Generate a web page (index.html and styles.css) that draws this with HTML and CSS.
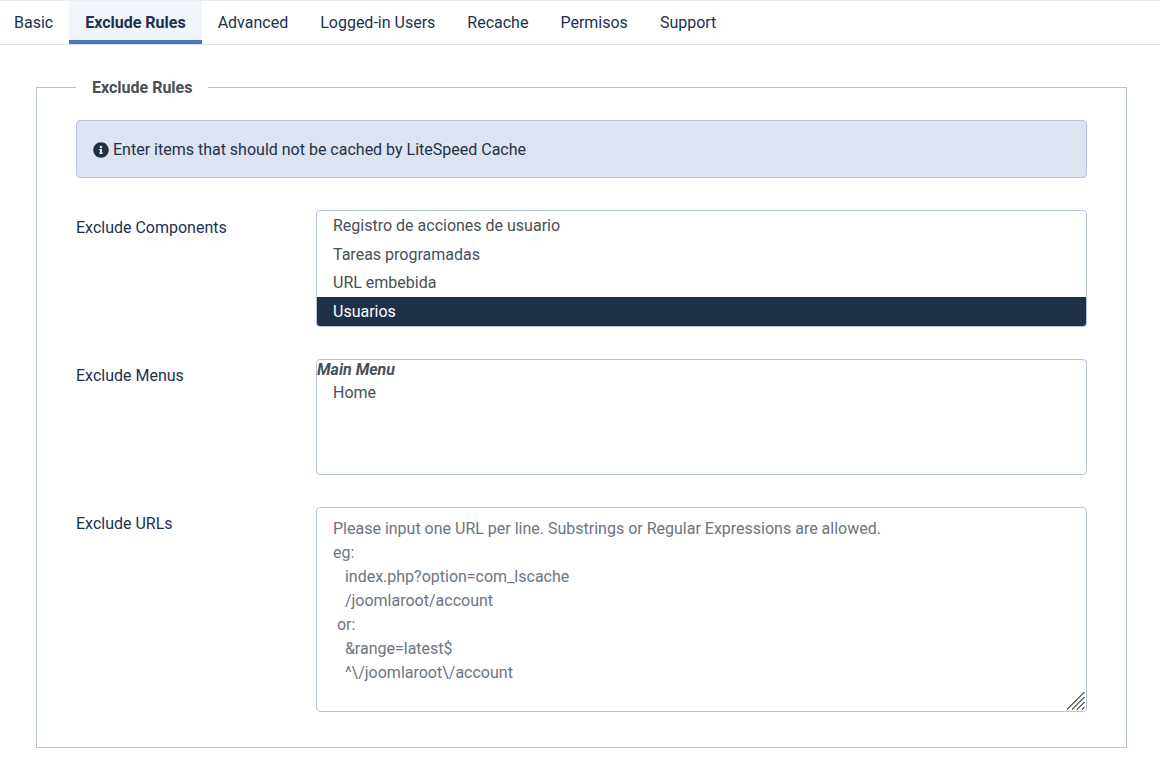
FILE: index.html
```html
<!DOCTYPE html>
<html lang="en">
<head>
<meta charset="utf-8">
<title>Exclude Rules</title>
<link rel="stylesheet" href="styles.css">
</head>
<body>
<nav class="tabs">
  <a class="tab first">Basic</a>
  <a class="tab active">Exclude Rules</a>
  <a class="tab">Advanced</a>
  <a class="tab">Logged-in Users</a>
  <a class="tab">Recache</a>
  <a class="tab">Permisos</a>
  <a class="tab">Support</a>
</nav>
<main class="content">
  <fieldset class="panel">
    <legend class="panel-title">Exclude Rules</legend>
    <div class="alert">
      <svg class="info-icon" viewBox="0 0 512 512" aria-hidden="true"><path d="M256 8C119 8 8 119 8 256s111 248 248 248 248-111 248-248S393 8 256 8zm0 110c23.200 0 42 18.800 42 42s-18.800 42-42 42-42-18.800-42-42 18.800-42 42-42zm56 254c0 6.600-5.400 12-12 12h-88c-6.600 0-12-5.400-12-12v-24c0-6.600 5.400-12 12-12h12v-64h-12c-6.600 0-12-5.400-12-12v-24c0-6.600 5.400-12 12-12h64c6.600 0 12 5.400 12 12v100h12c6.600 0 12 5.400 12 12v24z"/></svg>
      <span>Enter items that should not be cached by LiteSpeed Cache</span>
    </div>
    <div class="row">
      <label class="label label-low">Exclude Components</label>
      <div class="listbox components">
        <div class="option">Registro de acciones de usuario</div>
        <div class="option">Tareas programadas</div>
        <div class="option">URL embebida</div>
        <div class="option selected">Usuarios</div>
      </div>
    </div>
    <div class="row">
      <label class="label">Exclude Menus</label>
      <div class="listbox menus">
        <div class="group">Main Menu</div>
        <div class="option compact">Home</div>
      </div>
    </div>
    <div class="row">
      <label class="label">Exclude URLs</label>
      <div class="url-field">
        <textarea class="urls" placeholder="Please input one URL per line. Substrings or Regular Expressions are allowed.
eg:
   index.php?option=com_lscache
   /joomlaroot/account
 or:
   &amp;range=latest$
   ^\/joomlaroot\/account"></textarea>
        <svg class="grip" viewBox="0 0 18 18" aria-hidden="true"><path d="M0 17.500 17.500 0M5 17.500 17.500 5M10 17.500 17.500 10M15 17.500 17.500 15"/></svg>
      </div>
    </div>
  </fieldset>
</main>
</body>
</html>
```
FILE: styles.css
```css
* { box-sizing: border-box; }
html, body { margin: 0; background: #fff; }
body {
  font-family: Roboto, "Liberation Sans", sans-serif;
  font-size: 16px;
  line-height: 24px;
  color: #22314a;
  height: 778px;
  overflow: hidden;
}
.tabs {
  display: flex;
  height: 45px;
  border-top: 1px solid #e9edf5;
  border-bottom: 1px solid #dfe3f0;
}
.tab {
  display: block;
  padding: 10px 16px 0;
  height: 43px;
  color: #1c3150;
}
.tab.first { padding-left: 14px; }
.tab.active {
  font-weight: 700;
  background: #f1f5fa;
  border-bottom: 4px solid #4a78b5;
}
.content { padding: 30px 33px 0 36px; }
.panel {
  margin: 0;
  padding: 20px 39px 35px;
  border: 1px solid #b5c3de;
  min-width: 0;
}
.panel-title {
  margin-left: 0;
  padding: 1px 16px 0;
  font-weight: 700;
  color: #495057;
  line-height: 24px;
}
.alert {
  display: flex;
  align-items: center;
  gap: 4px;
  height: 58px;
  padding: 2px 16px 0;
  background: #dde3f0;
  border: 1px solid #b5c5e0;
  border-radius: 4px;
  color: #22314a;
  margin-bottom: 32px;
}
.info-icon { width: 16px; height: 16px; fill: #1f3047; flex: none; }
.row { display: flex; margin-bottom: 32px; }
.row:last-child { margin-bottom: 0; }
.label { width: 240px; flex: none; padding-top: 5px; color: #1c3150; }
.label-low { padding-top: 6px; }
.listbox {
  flex: 1;
  display: flex;
  flex-direction: column;
  overflow: hidden;
  border: 1px solid #b5c3de;
  border-radius: 4px;
  color: #495057;
  background: #fff;
}
.components { height: 117px; justify-content: flex-end; }
.menus { height: 116px; }
.option { flex: none; height: 28.500px; padding: 2.900px 16px 0; white-space: nowrap; }
.option.selected { height: 29px; padding-top: 3px; background: #1f3047; color: #fff; }
.option.compact { height: 24px; padding-top: 0; }
.group { font-weight: 700; font-style: italic; line-height: 19px; height: 21px; padding-top: 0; }
.url-field { flex: 1; position: relative; height: 205px; }
.urls {
  display: block;
  width: 100%;
  height: 100%;
  padding: 9px 16px 7px;
  border: 1px solid #b5c3de;
  border-radius: 4px;
  font: inherit;
  line-height: 24px;
  color: #495057;
  background: #fff;
  resize: none;
  outline: none;
}
.urls::placeholder { color: #6d757e; opacity: 1; }
.grip {
  position: absolute;
  right: 2px;
  bottom: 2px;
  width: 18px;
  height: 18px;
  pointer-events: none;
  fill: none;
  stroke: #707070;
  stroke-width: 1;
  shape-rendering: crispEdges;
}
```
